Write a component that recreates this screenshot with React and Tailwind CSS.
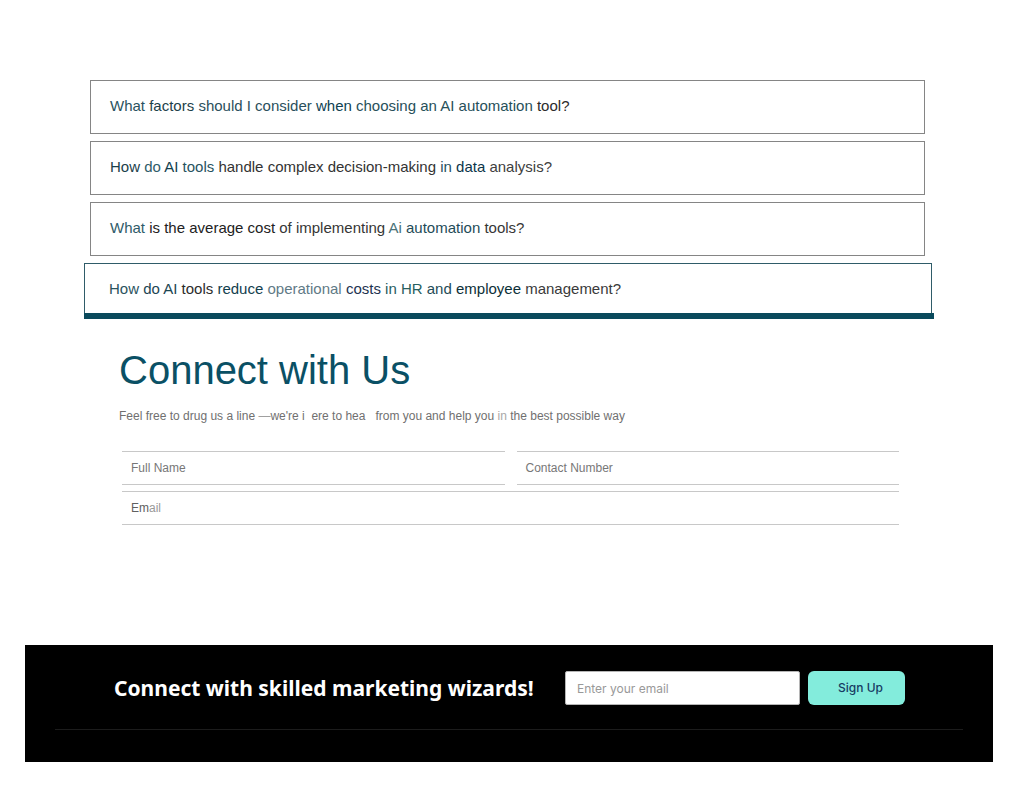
import { useState } from "react";

const questions = [
  [
    { text: "What ", color: "text-[#2a5360]" },
    { text: "factors ", color: "text-[#1d3f4a]" },
    { text: "should I consider ", color: "text-[#2a4f5c]" },
    { text: "when ", color: "text-[#0f4152]" },
    { text: "choosing an AI automation ", color: "text-[#27505a]" },
    { text: "tool?", color: "text-[#2b2b2b]" },
  ],
  [
    { text: "How ", color: "text-[#1b414b]" },
    { text: "do ", color: "text-[#2f5c69]" },
    { text: "AI ", color: "text-[#12404e]" },
    { text: "tools ", color: "text-[#27535f]" },
    { text: "handle complex decision-making ", color: "text-[#333333]" },
    { text: "in ", color: "text-[#27505f]" },
    { text: "data ", color: "text-[#0d3549]" },
    { text: "analysis?", color: "text-[#404040]" },
  ],
  [
    { text: "What ", color: "text-[#2f5c69]" },
    { text: "is the average cost ", color: "text-[#222222]" },
    { text: "of implementing ", color: "text-[#363636]" },
    { text: "Ai ", color: "text-[#4a7278]" },
    { text: "automation ", color: "text-[#1f4c58]" },
    { text: "tools?", color: "text-[#363636]" },
  ],
  [
    { text: "How ", color: "text-[#2a5360]" },
    { text: "do AI ", color: "text-[#1b4552]" },
    { text: "tools ", color: "text-[#2b2b2b]" },
    { text: "reduce ", color: "text-[#12404e]" },
    { text: "operational ", color: "text-[#5f7a86]" },
    { text: "costs ", color: "text-[#1d3350]" },
    { text: "in HR ", color: "text-[#27605f]" },
    { text: "and ", color: "text-[#1f4c58]" },
    { text: "employee ", color: "text-[#0c3038]" },
    { text: "management?", color: "text-[#3a3a3a]" },
  ],
];

function Question({ parts, active, onClick }) {
  return (
    <button
      type="button"
      onClick={onClick}
      className={
        active
          ? "block w-full border-b-[6px] border-[#0a4a5c] text-left"
          : "mx-[6px] block w-[calc(100%-15px)] border border-[#858585] text-left"
      }
    >
      <span
        className={
          active
            ? "mr-[2px] block border border-b-0 border-[#2f5c69] px-6 py-[12px] text-[15px] leading-[25px]"
            : "block px-[19px] pt-[13px] pb-[15px] text-[15px] leading-6"
        }
      >
        {parts.map((part) => (
          <span key={part.text} className={part.color}>
            {part.text}
          </span>
        ))}
      </span>
    </button>
  );
}

function Field({ id, type, children, className = "" }) {
  return (
    <label
      htmlFor={id}
      className={`flex h-[34px] items-center border-y border-[#c8c8c8] px-[9px] text-xs text-[#777777] ${className}`}
    >
      <span>{children}</span>
      <input id={id} name={id} type={type} className="ml-2 min-w-0 flex-1 bg-transparent focus:outline-none" />
    </label>
  );
}

export default function App() {
  const [active, setActive] = useState(3);

  return (
    <div className="bg-white pt-[80px] pb-[29px] font-['Liberation_Sans',Arial,sans-serif]">
      {/* FAQ */}
      <section className="mr-[90px] ml-[84px] flex flex-col gap-[7px]">
        {questions.map((parts, i) => (
          <Question key={i} parts={parts} active={active === i} onClick={() => setActive(i)} />
        ))}
      </section>

      {/* Contact form */}
      <section className="mr-[125px] ml-[119px] pt-[27px]">
        <h1 className="text-[40px] leading-12 text-[#0a5065]">Connect with Us</h1>
        <p className="mt-3 text-xs leading-5 whitespace-pre-wrap text-[#707070]">
          {"Feel free to drug us a line "}
          <span className="text-[#a0a0a0]">—</span>
          {"we're i  ere to hea   from you and help you "}
          <span className="text-[#a8a8a8]">in</span>
          {" the best possible way"}
        </p>
        <form className="mt-[25px] ml-[3px] grid grid-cols-2 gap-x-3 gap-y-[6px]">
          <Field id="fullName" type="text">
            Full Name
          </Field>
          <Field id="contactNumber" type="tel">
            Contact Number
          </Field>
          <Field id="email" type="email" className="col-span-2">
            <span className="text-[#606060]">Em</span>
            <span className="text-[#999999]">ail</span>
          </Field>
        </form>
      </section>

      {/* Newsletter */}
      <footer className="mt-[120px] mr-[31px] ml-[25px] bg-black px-[30px] pt-[26px] pb-8">
        <div className="flex items-center border-b border-[#1c1c1c] pr-[58px] pb-6 pl-[59px]">
          <h2 className="flex-1 font-['Noto_Sans',sans-serif] text-[21px] leading-8 font-bold whitespace-nowrap text-white">
            Connect with skilled marketing wizards!
          </h2>
          <form className="flex gap-2 font-['Inter',sans-serif] text-xs" onSubmit={(e) => e.preventDefault()}>
            <input
              type="email"
              aria-label="Enter your email"
              placeholder="Enter your email"
              className="h-[34px] w-[235px] rounded-xs border border-[#b5b5b5] bg-white px-[11px] text-[#333333] placeholder:text-[#999999] focus:outline-none"
            />
            <button
              type="submit"
              className="h-[34px] w-[97px] rounded-md bg-[#83ecdc] pl-2 font-medium text-[#173b63]"
            >
              Sign Up
            </button>
          </form>
        </div>
      </footer>
    </div>
  );
}
